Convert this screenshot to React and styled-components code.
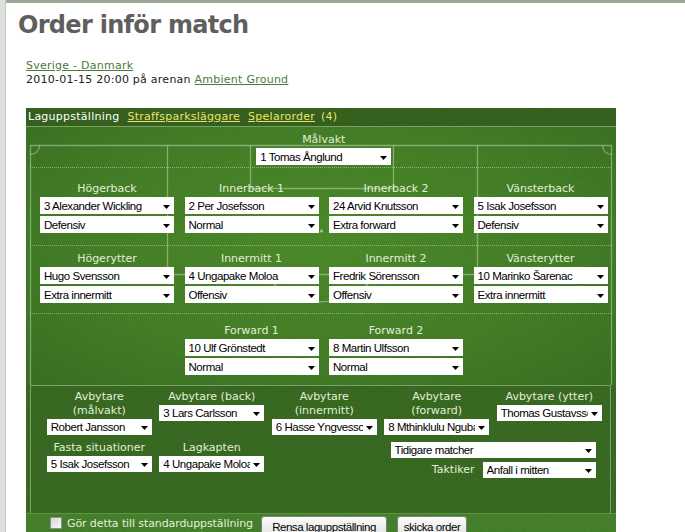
import React from "react";
import styled, { createGlobalStyle } from "styled-components";

const GlobalStyle = createGlobalStyle`
  html, body { margin: 0; padding: 0; background: #fff; }
  body {
    font-family: "DejaVu Sans", Verdana, sans-serif;
    font-size: 11px;
    color: #222;
    overflow: hidden;
  }
`;

const noise = (w, h, op) =>
  `<filter id='n'><feTurbulence type='fractalNoise' baseFrequency='0.85' numOctaves='2' stitchTiles='stitch'/><feColorMatrix type='saturate' values='0'/></filter><rect width='${w}' height='${h}' filter='url(#n)' opacity='${op}'/>`;

const fieldSvg = `<svg xmlns='http://www.w3.org/2000/svg' width='590' height='258' viewBox='0 0 590 258'>${noise(
  590,
  258,
  0.13
)}<g fill='none' stroke='rgba(225,240,210,0.42)' stroke-width='1.3'><path d='M4.5 258 V18.5 H585.5 V258'/><path d='M4.5 27.5 A9 9 0 0 0 13.5 18.5'/><path d='M576.5 18.5 A9 9 0 0 0 585.5 27.5'/><path d='M141.5 18.5 V147.5 H451.5 V18.5'/><path d='M224.5 18.5 V61.5 H367.5 V18.5'/><path d='M239 147.5 A71 71 0 0 0 351 147.5'/></g><circle cx='295.5' cy='104' r='1.6' fill='rgba(225,240,210,0.6)'/></svg>`;

const noiseSvg = `<svg xmlns='http://www.w3.org/2000/svg' width='200' height='200'>${noise(200, 200, 0.13)}</svg>`;

const url = (s) => `url("data:image/svg+xml,${encodeURIComponent(s)}")`;
const FIELD_BG = url(fieldSvg);
const NOISE_BG = url(noiseSvg);

const LINE = "rgba(225,240,210,0.42)";

const Page = styled.div`
  display: flex;
  min-height: 100vh;
`;

const LeftStrip = styled.div`
  width: 5px;
  flex: none;
  background: #dde1dd;
  border-right: 1px solid #c6cbc6;
`;

const Main = styled.div`
  flex: 1;
  border-top: 3px solid #9ba897;
  padding-left: 12px;
`;

const Title = styled.h1`
  margin: 7px 0 0 0;
  font-family: "DejaVu Sans", Verdana, sans-serif;
  font-weight: bold;
  font-size: 24px;
  letter-spacing: -0.7px;
  line-height: 30px;
  color: #5f5f5f;
`;

const Body = styled.div`
  padding-left: 8px;
`;

const Info = styled.div`
  margin-top: 19px;
  line-height: 14px;
  letter-spacing: 0.25px;
  color: #222;
`;

const Link = styled.a`
  color: #4b7a3c;
  text-decoration: underline;
`;

const Panel = styled.div`
  margin-top: 21px;
  width: 590px;
  background: #3a791e;
`;

const TabBar = styled.div`
  display: flex;
  align-items: center;
  gap: 8px;
  height: 18px;
  padding-left: 2px;
  line-height: 18px;
  letter-spacing: 0.25px;
  background: #2b5912 ${NOISE_BG};
  border-bottom: 1px solid #79a25f;
`;

const Tab = styled.span`
  color: ${(p) => (p.$active ? "#ffffff" : "#ebe36c")};
  text-decoration: ${(p) => (p.$link ? "underline" : "none")};
  margin-left: ${(p) => p.$ml || 0}px;
`;

const Field = styled.div`
  padding: 0 5px 0 4px;
  height: 258px;
  box-sizing: border-box;
  background: ${FIELD_BG},
    radial-gradient(ellipse at 50% 45%, #43851f 0%, #3a781c 60%, #306818 100%);
`;

const FieldRow = styled.div`
  box-sizing: border-box;
  height: ${(p) => p.$h}px;
  padding-top: ${(p) => p.$pt}px;
  border-bottom: ${(p) => (p.$dotted ? `1px dotted rgba(225,240,210,0.45)` : "none")};
`;

const PosGrid = styled.div`
  display: grid;
  grid-template-columns: repeat(4, 134px);
  column-gap: 10.5px;
  padding-left: 10px;
`;

const Slot = styled.div`
  grid-column: ${(p) => p.$col};
  display: flex;
  flex-direction: column;
  align-items: center;
  gap: 2px;
`;

const PosLabel = styled.div`
  line-height: 13px;
  color: #e3eed6;
  text-align: center;
  white-space: nowrap;
`;

const SelectBox = styled.div`
  display: flex;
  align-items: center;
  box-sizing: border-box;
  width: ${(p) => p.$w}px;
  height: ${(p) => p.$h}px;
  padding: 0 4px 0 4px;
  background: #fff;
  font-family: "Liberation Sans", Arial, sans-serif;
  font-size: 11.5px;
  letter-spacing: -0.45px;
  color: #000;
`;

const SelectText = styled.span`
  flex: 1;
  overflow: hidden;
  white-space: nowrap;
  min-width: 0;
`;

const Arrow = styled.svg`
  flex: none;
  width: 7px;
  height: 4px;
  margin: 2px 0 0 3px;
`;

function Select({ w, h = 17, children }) {
  return (
    <SelectBox $w={w} $h={h}>
      <SelectText>{children}</SelectText>
      <Arrow viewBox="0 0 7 4">
        <polygon points="0,0 7,0 3.5,4" fill="#000" />
      </Arrow>
    </SelectBox>
  );
}

const Bench = styled.div`
  padding: 0 5px 0 4px;
  background: #2e6216 ${NOISE_BG};
`;

const BenchBox = styled.div`
  box-sizing: border-box;
  height: 128px;
  border: 1px solid ${LINE};
  border-bottom: none;
`;

const BenchGrid = styled.div`
  display: grid;
  grid-template-columns: repeat(5, 112.5px);
  row-gap: 6px;
  align-items: start;
  padding: 4px 0 0 12px;
`;

const BenchCell = styled.div`
  display: flex;
  flex-direction: column;
  align-items: center;
  gap: 1px;
`;

const BenchLabel = styled.div`
  line-height: 14px;
  color: #e3eed6;
  text-align: center;
  white-space: nowrap;
`;

const RightBlock = styled.div`
  grid-column: 4 / 6;
  display: flex;
  flex-direction: column;
  align-items: flex-end;
  gap: 4px;
  padding-right: 10px;
  margin-top: 1px;
`;

const TacticRow = styled.div`
  display: flex;
  align-items: center;
  gap: 8px;
`;

const BottomBar = styled.div`
  display: flex;
  align-items: flex-start;
  height: 26px;
  box-sizing: border-box;
  padding: 3px 0 0 24px;
  background: #3b7a20 ${NOISE_BG};
  border-top: 1px solid #5e9444;
`;

const CheckLabel = styled.label`
  display: flex;
  align-items: flex-start;
  gap: 5px;
  line-height: 13px;
  letter-spacing: -0.1px;
  color: #e6efdc;
  margin-right: 8px;
`;

const Check = styled.input`
  appearance: none;
  margin: 0;
  width: 12px;
  height: 12px;
  box-sizing: border-box;
  border: 1px solid #8a8f8a;
  background: linear-gradient(135deg, #d4d8d4, #f8f8f8);
`;

const Button = styled.button`
  width: ${(p) => p.$w}px;
  height: 21px;
  margin: -1px ${(p) => p.$mr || 0}px 0 0;
  padding: 0;
  box-sizing: border-box;
  border: 1px solid #7d827d;
  border-radius: 3px;
  background: linear-gradient(#fbfbfb, #e3e3e3);
  font-family: "Liberation Sans", Arial, sans-serif;
  font-size: 11.5px;
  letter-spacing: -0.45px;
  color: #000;
`;

export default function App() {
  return (
    <>
      <GlobalStyle />
      <Page>
        <LeftStrip />
        <Main>
          <Title>Order inför match</Title>
          <Body>
            <Info>
              <Link href="#">Sverige - Danmark</Link>
              <br />
              2010-01-15 20:00 på arenan <Link href="#">Ambient Ground</Link>
            </Info>
            <Panel>
              <TabBar>
                <Tab $active>Laguppställning</Tab>
                <Tab $link>Straffsparksläggare</Tab>
                <Tab $link>Spelarorder</Tab>
                <Tab $ml={-2}>(4)</Tab>
              </TabBar>
              <Field>
                <FieldRow $h={41} $pt={6} $dotted>
                  <PosGrid>
                    <Slot $col="2 / 4">
                      <PosLabel>Målvakt</PosLabel>
                      <Select w={135}>1 Tomas Ånglund</Select>
                    </Slot>
                  </PosGrid>
                </FieldRow>
                <FieldRow $h={78} $pt={14} $dotted>
                  <PosGrid>
                    <Slot>
                      <PosLabel>Högerback</PosLabel>
                      <Select w={134}>3 Alexander Wickling</Select>
                      <Select w={134}>Defensiv</Select>
                    </Slot>
                    <Slot>
                      <PosLabel>Innerback 1</PosLabel>
                      <Select w={134}>2 Per Josefsson</Select>
                      <Select w={134}>Normal</Select>
                    </Slot>
                    <Slot>
                      <PosLabel>Innerback 2</PosLabel>
                      <Select w={134}>24 Arvid Knutsson</Select>
                      <Select w={134}>Extra forward</Select>
                    </Slot>
                    <Slot>
                      <PosLabel>Vänsterback</PosLabel>
                      <Select w={134}>5 Isak Josefsson</Select>
                      <Select w={134}>Defensiv</Select>
                    </Slot>
                  </PosGrid>
                </FieldRow>
                <FieldRow $h={68} $pt={6} $dotted>
                  <PosGrid>
                    <Slot>
                      <PosLabel>Högerytter</PosLabel>
                      <Select w={134}>Hugo Svensson</Select>
                      <Select w={134}>Extra innermitt</Select>
                    </Slot>
                    <Slot>
                      <PosLabel>Innermitt 1</PosLabel>
                      <Select w={134}>4 Ungapake Moloa</Select>
                      <Select w={134}>Offensiv</Select>
                    </Slot>
                    <Slot>
                      <PosLabel>Innermitt 2</PosLabel>
                      <Select w={134}>Fredrik Sörensson</Select>
                      <Select w={134}>Offensiv</Select>
                    </Slot>
                    <Slot>
                      <PosLabel>Vänsterytter</PosLabel>
                      <Select w={134}>10 Marinko Šarenac</Select>
                      <Select w={134}>Extra innermitt</Select>
                    </Slot>
                  </PosGrid>
                </FieldRow>
                <FieldRow $h={71} $pt={10}>
                  <PosGrid>
                    <Slot $col="2">
                      <PosLabel>Forward 1</PosLabel>
                      <Select w={134}>10 Ulf Grönstedt</Select>
                      <Select w={134}>Normal</Select>
                    </Slot>
                    <Slot $col="3">
                      <PosLabel>Forward 2</PosLabel>
                      <Select w={134}>8 Martin Ulfsson</Select>
                      <Select w={134}>Normal</Select>
                    </Slot>
                  </PosGrid>
                </FieldRow>
              </Field>
              <Bench>
                <BenchBox>
                  <BenchGrid>
                    <BenchCell>
                      <BenchLabel>
                        Avbytare
                        <br />
                        (målvakt)
                      </BenchLabel>
                      <Select w={105} h={16}>Robert Jansson</Select>
                    </BenchCell>
                    <BenchCell>
                      <BenchLabel>Avbytare (back)</BenchLabel>
                      <Select w={105} h={16}>3 Lars Carlsson</Select>
                    </BenchCell>
                    <BenchCell>
                      <BenchLabel>
                        Avbytare
                        <br />
                        (innermitt)
                      </BenchLabel>
                      <Select w={105} h={16}>6 Hasse Yngvesson</Select>
                    </BenchCell>
                    <BenchCell>
                      <BenchLabel>
                        Avbytare
                        <br />
                        (forward)
                      </BenchLabel>
                      <Select w={105} h={16}>8 Mthinklulu Ngubane</Select>
                    </BenchCell>
                    <BenchCell>
                      <BenchLabel>Avbytare (ytter)</BenchLabel>
                      <Select w={105} h={16}>Thomas Gustavsson</Select>
                    </BenchCell>
                    <BenchCell>
                      <BenchLabel>Fasta situationer</BenchLabel>
                      <Select w={105} h={16}>5 Isak Josefsson</Select>
                    </BenchCell>
                    <BenchCell>
                      <BenchLabel>Lagkapten</BenchLabel>
                      <Select w={105} h={16}>4 Ungapake Moloa</Select>
                    </BenchCell>
                    <RightBlock>
                      <Select w={205} h={16}>Tidigare matcher</Select>
                      <TacticRow>
                        <BenchLabel>Taktiker</BenchLabel>
                        <Select w={113} h={16}>Anfall i mitten</Select>
                      </TacticRow>
                    </RightBlock>
                  </BenchGrid>
                </BenchBox>
              </Bench>
              <BottomBar>
                <CheckLabel>
                  <Check type="checkbox" />
                  Gör detta till standarduppställning
                </CheckLabel>
                <Button $w={126} $mr={10}>Rensa laguppställning</Button>
                <Button $w={70}>skicka order</Button>
              </BottomBar>
            </Panel>
          </Body>
        </Main>
      </Page>
    </>
  );
}
